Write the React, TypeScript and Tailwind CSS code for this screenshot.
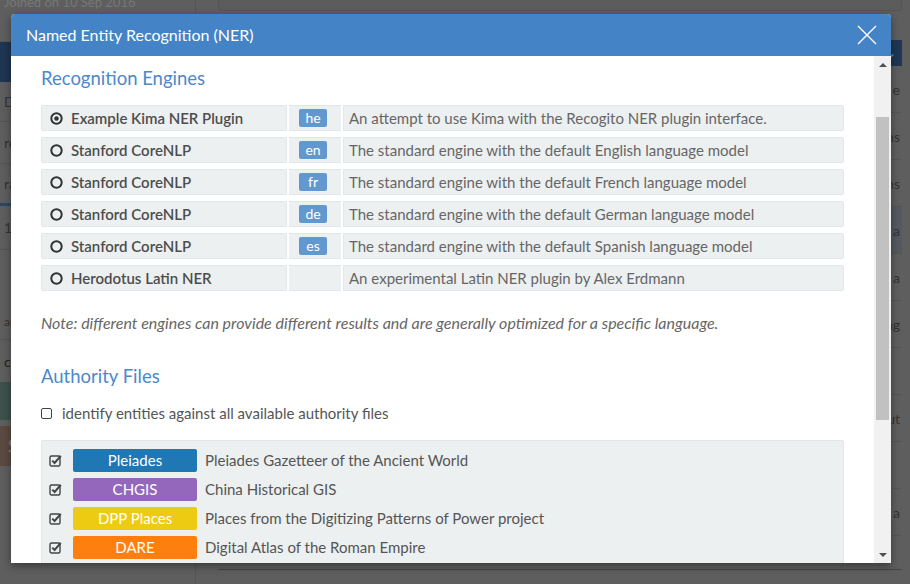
import React from "react";

const ENGINES = [
  { name: "Example Kima NER Plugin", lang: "he", desc: "An attempt to use Kima with the Recogito NER plugin interface.", selected: true },
  { name: "Stanford CoreNLP", lang: "en", desc: "The standard engine with the default English language model" },
  { name: "Stanford CoreNLP", lang: "fr", desc: "The standard engine with the default French language model" },
  { name: "Stanford CoreNLP", lang: "de", desc: "The standard engine with the default German language model" },
  { name: "Stanford CoreNLP", lang: "es", desc: "The standard engine with the default Spanish language model" },
  { name: "Herodotus Latin NER", lang: "", desc: "An experimental Latin NER plugin by Alex Erdmann" },
];

const AUTHORITIES = [
  { label: "Pleiades", bg: "bg-[#1f77b4]", desc: "Pleiades Gazetteer of the Ancient World" },
  { label: "CHGIS", bg: "bg-[#9467bd]", desc: "China Historical GIS" },
  { label: "DPP Places", bg: "bg-[#eecb13]", desc: "Places from the Digitizing Patterns of Power project" },
  { label: "DARE", bg: "bg-[#ff7f0e]", desc: "Digital Atlas of the Roman Empire" },
];

function Radio({ on }: { on?: boolean }) {
  return (
    <svg width="13" height="13" viewBox="0 0 13 13" className="shrink-0">
      <circle cx="6.5" cy="6.5" r="5.2" fill="none" stroke="#333" strokeWidth="2" />
      {on && <circle cx="6.5" cy="6.5" r="2.3" fill="#333" />}
    </svg>
  );
}

function CheckSquare() {
  return (
    <svg width="13" height="13" viewBox="0 0 13 13" className="shrink-0">
      <rect x="1" y="2" width="10" height="10" rx="1.5" fill="none" stroke="#444" strokeWidth="1.4" />
      <path d="M3.3 6.6 L5.6 9 L11.8 1.8" fill="none" stroke="#444" strokeWidth="2" />
    </svg>
  );
}

function Background() {
  return (
    <div className="absolute inset-0 flex bg-[#5e5e5e]">
      <div className="w-[196px] border-r border-[#555] flex flex-col">
        <div className="h-[28px] text-[13px] leading-[13px] text-[#777] pl-1 -mt-[4px]">Joined on 10 Sep 2016</div>
        <div className="h-[18px] border-b border-[#575757]" />
        <div className="h-[40px] bg-[#1e3553]" />
        <div className="h-[40px] border-b border-[#555] flex items-center text-[14px] text-[#333] pl-1">Do</div>
        <div className="h-[42px] border-b border-[#555] flex items-center text-[14px] text-[#333] pl-1">re</div>
        <div className="h-[42px] border-b-[3px] border-[#2a4866] flex items-center text-[14px] text-[#333] pl-1">ra</div>
        <div className="h-[44px] border-b border-[#555] flex items-center text-[14px] text-[#333] pl-1">1,</div>
        <div className="h-[90px] border-b border-[#555] flex items-end text-[12px] text-[#333] pl-1 pb-2">ar</div>
        <div className="h-[42px] flex items-center text-[14px] text-[#222] pl-1">co</div>
        <div className="h-[38px] bg-[#3c514c]" />
        <div className="h-[6px]" />
        <div className="h-[40px] bg-[#5a4a41] flex items-center text-[18px] font-bold text-[#777] pl-2">S</div>
      </div>
      <div className="flex-1 flex flex-col pl-[22px] pr-[8px]">
        <div className="h-[11px] border border-t-0 border-[#555] rounded-b bg-[#5c5c5c]" />
        <div className="h-[29px]" />
        <div className="h-[26px] bg-[#1f3754] flex justify-end items-center pr-[6px] text-[#8a97a6] text-[12px]">⌄</div>
        <div className="flex flex-col text-[14px] text-[#333]">
          {["st e", "nths", "nths", "rs a", "rs a", "r ag", "", "nut", "", "rs a"].map((t, i) => (
            <div key={i} className={`h-[47px] border-b border-[#555] flex items-center justify-end pr-[2px] ${i === 3 ? "bg-[#545a60]" : ""}`}>
              {t}
            </div>
          ))}
        </div>
        <div className="mt-auto mb-[14px] h-px bg-[#444]" />
      </div>
    </div>
  );
}

export default function App() {
  return (
    <div className="relative w-[910px] h-[584px] overflow-hidden" style={{ fontFamily: "Lato, 'Open Sans', sans-serif" }}>
      <Background />
      <div className="absolute left-[11px] top-[14px] w-[880px] h-[549px] rounded-t-[4px] overflow-hidden flex flex-col bg-white shadow-[0_3px_9px_rgba(0,0,0,0.4)]">
        <div className="h-[42px] shrink-0 bg-[#4483c5] flex items-center justify-between pl-[15px] pr-[14px]">
          <h1 className="text-white text-[16px]">Named Entity Recognition (NER)</h1>
          <svg width="20" height="20" viewBox="0 0 20 20">
            <path d="M1 1 L19 19 M19 1 L1 19" stroke="#fff" strokeWidth="1.4" />
          </svg>
        </div>
        <div className="flex-1 flex min-h-0">
          <div className="flex-1 overflow-hidden pl-[30px] pr-[30px] pt-[10px]">
            <h2 className="text-[18.5px] text-[#4b89cc] leading-[24px]">Recognition Engines</h2>
            <div className="mt-[15px] flex flex-col gap-[6px]">
              {ENGINES.map((e, i) => (
                <div key={i} className="grid grid-cols-[246px_52px_1fr] gap-[2px] h-[26px] text-[15px]">
                  <div className="bg-[#ecf0f1] border border-[#e3e6e8] rounded-l-[2px] flex items-center gap-[8px] pl-[8px] font-semibold text-[#4d4d4d]">
                    <Radio on={e.selected} />
                    <span>{e.name}</span>
                  </div>
                  <div className="bg-[#ecf0f1] border-y border-[#e3e6e8] flex items-center pl-[10px]">
                    {e.lang && (
                      <span className="bg-[#6398cf] text-white text-[14px] leading-[18px] w-[28px] text-center rounded-[2px]">{e.lang}</span>
                    )}
                  </div>
                  <div className="bg-[#ecf0f1] border border-[#e3e6e8] rounded-r-[2px] flex items-center pl-[5px] text-[#666]">
                    {e.desc}
                  </div>
                </div>
              ))}
            </div>
            <p className="mt-[20px] text-[16px] italic text-[#666]">
              Note: different engines can provide different results and are generally optimized for a specific language.
            </p>
            <h2 className="mt-[29px] text-[18.5px] text-[#4b89cc] leading-[24px]">Authority Files</h2>
            <label className="mt-[14px] flex items-center gap-[10px] text-[15px] text-[#555]">
              <span className="w-[11px] h-[11px] border border-[#444] rounded-[2px] bg-white" />
              identify entities against all available authority files
            </label>
            <div className="mt-[15px] bg-[#ecf0f1] border border-[#e3e6e8] rounded-[2px] pt-[8px] pb-[8px] flex flex-col gap-[6px]">
              {AUTHORITIES.map((a) => (
                <div key={a.label} className="flex items-center h-[23px] pl-[7px] text-[15px]">
                  <CheckSquare />
                  <span className={`ml-[11px] w-[124px] h-[23px] rounded-[2px] flex items-center justify-center text-white text-[15px] ${a.bg}`}>
                    {a.label}
                  </span>
                  <span className="ml-[8px] text-[#555]">{a.desc}</span>
                </div>
              ))}
            </div>
          </div>
          <div className="w-[17px] shrink-0 bg-[#f1f1f1] flex flex-col items-center">
            <div className="h-[17px] flex items-center justify-center">
              <div className="w-0 h-0 border-x-[4px] border-x-transparent border-b-[4px] border-b-[#505050]" />
            </div>
            <div className="mt-[44px] w-[13px] h-[303px] bg-[#c1c1c1]" />
            <div className="mt-auto h-[17px] flex items-center justify-center">
              <div className="w-0 h-0 border-x-[4px] border-x-transparent border-t-[4px] border-t-[#505050]" />
            </div>
          </div>
        </div>
      </div>
    </div>
  );
}
